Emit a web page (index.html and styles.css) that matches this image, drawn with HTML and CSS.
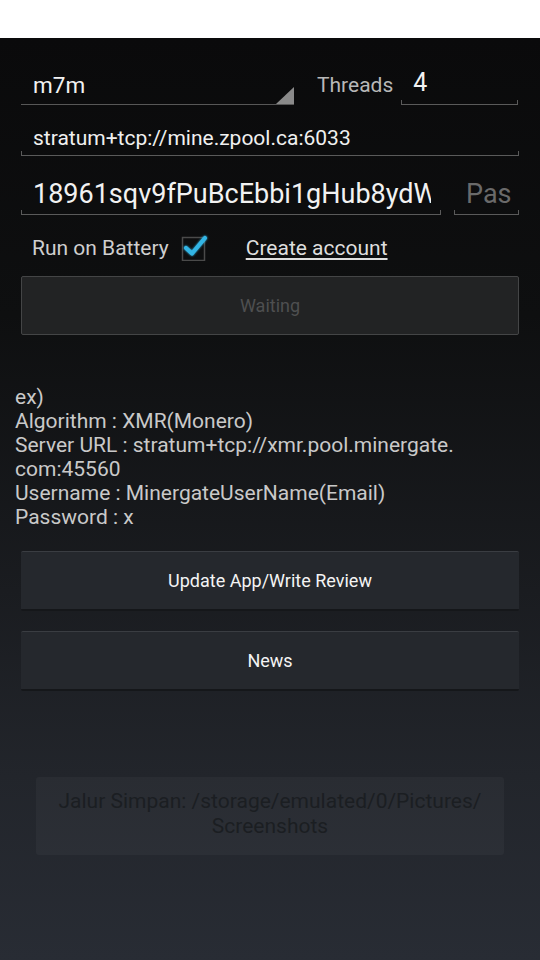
FILE: index.html
```html
<!DOCTYPE html>
<html>
<head>
<meta charset="utf-8">
<link rel="stylesheet" href="styles.css">
</head>
<body>
<div class="topbar"></div>
<main class="screen">
  <div class="row row-algo">
    <div class="spinner"><span class="spinner-text">m7m</span><span class="spinner-tri"></span></div>
    <span class="threads-label">Threads</span>
    <div class="field field-threads"><span class="val-big">4</span></div>
  </div>
  <div class="row">
    <div class="field field-url"><span class="val-url">stratum+tcp://mine.zpool.ca:6033</span></div>
  </div>
  <div class="row row-user">
    <div class="field field-user"><span class="val-user">18961sqv9fPuBcEbbi1gHub8ydW</span></div>
    <div class="field field-pass"><span class="val-hint">Pas</span></div>
  </div>
  <div class="row row-check">
    <span class="check-label">Run on Battery</span>
    <span class="checkbox">
      <svg width="30" height="30" viewBox="0 0 30 30">
        <defs>
          <filter id="glow" x="-50%" y="-50%" width="200%" height="200%">
            <feGaussianBlur stdDeviation="1.2" result="b"/>
            <feMerge><feMergeNode in="b"/><feMergeNode in="SourceGraphic"/></feMerge>
          </filter>
        </defs>
        <rect x="2.5" y="6.5" width="22" height="23" fill="none" stroke="#4a4a4a" stroke-width="1.5"/>
        <path d="M6 17 L12 22.5 L25 7" fill="none" stroke="#33b5e5" stroke-width="4.2" stroke-linecap="round" stroke-linejoin="round" filter="url(#glow)"/>
      </svg>
    </span>
    <a class="create-link">Create account</a>
  </div>
  <div class="btn btn-waiting">Waiting</div>
  <div class="example">
    <div>ex)</div>
    <div>Algorithm : XMR(Monero)</div>
    <div>Server URL : stratum+tcp://xmr.pool.minergate.</div>
    <div>com:45560</div>
    <div>Username : MinergateUserName(Email)</div>
    <div>Password : x</div>
  </div>
  <div class="btn btn-main btn-update">Update App/Write Review</div>
  <div class="btn btn-main btn-news">News</div>
  <div class="toast">Jalur Simpan: /storage/emulated/0/Pictures/<br>Screenshots</div>
</main>
</body>
</html>
```
FILE: styles.css
```css
html, body {
  margin: 0;
  padding: 0;
}
body {
  width: 540px;
  height: 960px;
  overflow: hidden;
  background: #fff;
  font-family: Roboto, "Noto Sans", sans-serif;
}
.topbar {
  height: 38px;
  background: #ffffff;
}
.screen {
  height: 922px;
  box-sizing: border-box;
  padding: 19px 21px 0 21px;
  background: linear-gradient(to bottom, #0a0a0b 0%, #0e0f10 30%, #1a1c20 60%, #22252b 80%, #282c34 100%);
}
.row {
  display: flex;
  align-items: flex-end;
}
.spinner {
  position: relative;
  width: 273px;
  height: 48px;
  border-bottom: 1px solid #575757;
  box-sizing: border-box;
  display: flex;
  align-items: flex-end;
  padding-left: 12px;
  padding-bottom: 6px;
}
.spinner-text {
  color: #f2f2f2;
  font-size: 22.5px;
  line-height: 26px;
}
.spinner-tri {
  position: absolute;
  right: 0;
  bottom: 0;
  width: 0;
  height: 0;
  border-left: 18px solid transparent;
  border-bottom: 17px solid #8a8a8a;
}
.threads-label {
  color: #b8b8b8;
  font-size: 21px;
  line-height: 24px;
  margin-left: 23px;
  margin-bottom: 8px;
}
.field {
  box-sizing: border-box;
  height: 48px;
  display: flex;
  align-items: flex-end;
  padding-left: 12px;
  overflow: hidden;
  white-space: nowrap;
  background-image:
    linear-gradient(#5a5a5a, #5a5a5a),
    linear-gradient(#5a5a5a, #5a5a5a),
    linear-gradient(#5a5a5a, #5a5a5a);
  background-repeat: no-repeat;
  background-size: 100% 1px, 1px 5px, 1px 5px;
  background-position: left bottom, left bottom, right bottom;
}
.field-threads {
  flex: 1;
  margin-left: 8px;
  margin-right: 1px;
  padding-bottom: 7px;
}
.val-big {
  color: #f2f2f2;
  font-size: 25px;
  line-height: 30px;
}
.field-url {
  flex: 1;
  height: 51px;
  padding-bottom: 5px;
}
.val-url {
  color: #f0f0f0;
  font-size: 21px;
  line-height: 25px;
}
.row-user {
  margin-top: 10px;
}
.field-user {
  width: 420px;
  height: 49px;
  padding-right: 10px;
  padding-bottom: 5px;
}
.val-user {
  color: #f2f2f2;
  font-size: 27px;
  line-height: 32px;
  overflow: hidden;
  display: block;
}
.field-pass {
  flex: 1;
  height: 49px;
  margin-left: 13px;
  padding-left: 12px;
  padding-right: 8px;
  padding-bottom: 5px;
}
.val-hint {
  color: #6a6a6a;
  font-size: 27px;
  line-height: 32px;
  overflow: hidden;
  display: block;
}
.row-check {
  align-items: center;
  height: 42px;
  margin-top: 12px;
  padding-left: 11px;
}
.check-label {
  color: #cfcfcf;
  font-size: 21px;
}
.checkbox {
  display: inline-flex;
  width: 30px;
  height: 30px;
  margin-left: 11px;
  margin-top: -5px;
}
.create-link {
  color: #dedede;
  font-size: 21px;
  text-decoration: underline;
  text-underline-offset: 3px;
  margin-left: 36px;
}
.btn {
  box-sizing: border-box;
  height: 60px;
  display: flex;
  align-items: center;
  justify-content: center;
  font-size: 18px;
}
.btn-waiting {
  margin-top: 7px;
  height: 59px;
  background: #222324;
  border: 1px solid #444546;
  border-radius: 2px;
  color: #4e4f50;
}
.example {
  margin: 50px -6px 0 -6px;
  color: #c9c9c9;
  font-size: 21px;
  line-height: 24px;
}
.btn-main {
  background: #25282d;
  border-top: 1px solid #3a3d42;
  border-bottom: 2px solid #15171a;
  border-radius: 2px;
  color: #f4f4f4;
}
.btn-update {
  margin-top: 22px;
}
.btn-news {
  margin-top: 20px;
}
.toast {
  margin: 86px 15px 0 15px;
  height: 78px;
  box-sizing: border-box;
  padding-top: 12px;
  background: rgba(255, 255, 255, 0.035);
  border-radius: 3px;
  color: #1b1e22;
  font-size: 21px;
  line-height: 25px;
  text-align: center;
}
```
